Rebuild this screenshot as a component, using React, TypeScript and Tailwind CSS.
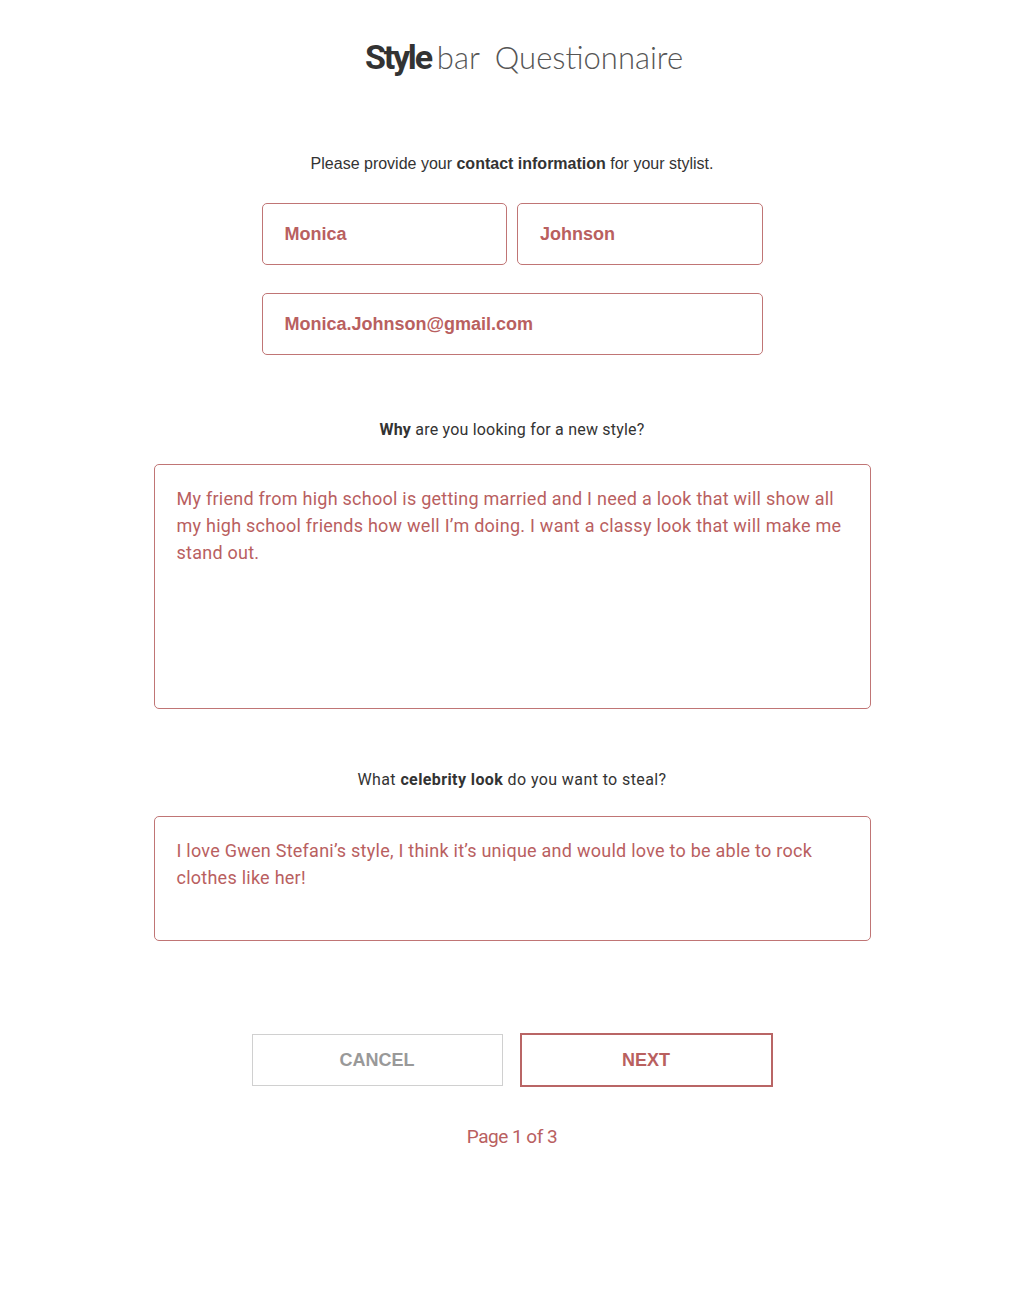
import React from 'react'

const red = 'text-[#b9605f]'

function Field({ value, className = '' }: { value: string; className?: string }) {
  return (
    <div
      className={`h-[62px] rounded-[5px] border border-[#c07575] flex items-center pl-[22px] text-[18px] font-semibold ${red} ${className}`}
    >
      {value}
    </div>
  )
}

export default function App() {
  return (
    <div className="min-h-[1306px] bg-white font-['Liberation_Sans',Arial,sans-serif] text-[#333]">
      <div className="flex flex-col items-center">
        <h1 className="mt-[35px] pl-[24px] flex items-baseline text-[31px] leading-[44px] text-[#333]">
          <span className="font-['Roboto',sans-serif] font-bold text-[34px] tracking-[-2.2px]">Style</span>
          <span className="ml-[6px] font-['Lato',sans-serif] font-light text-[#555]">bar</span>
          <span className="ml-[15px] font-['Lato',sans-serif] font-light text-[#555]">Questionnaire</span>
        </h1>

        <p className="mt-[74px] text-[16px] leading-[22px]">
          Please provide your <b>contact information</b> for your stylist.
        </p>

        <div className="mt-[28px] w-[501px] flex flex-col gap-[28px]">
          <div className="flex gap-[10px]">
            <Field value="Monica" className="flex-1" />
            <Field value="Johnson" className="flex-1" />
          </div>
          <Field value="Monica.Johnson@gmail.com" />
        </div>

        <p className="mt-[64px] text-[16px] leading-[22px] font-['Roboto',sans-serif] tracking-[0.2px]">
          <b>Why</b> are you looking for a new style?
        </p>

        <div
          className={`mt-[23px] w-[717px] h-[245px] rounded-[5px] border border-[#c07575] px-[22px] pt-[20px] text-[18px] leading-[27px] font-['Roboto',sans-serif] tracking-[0.25px] ${red}`}
        >
          My friend from high school is getting married and I need a look that will show all my high school friends how
          well I’m doing. I want a classy look that will make me stand out.
        </div>

        <p className="mt-[60px] text-[16px] leading-[22px] font-['Roboto',sans-serif] tracking-[0.4px]">
          What <b>celebrity look</b> do you want to steal?
        </p>

        <div
          className={`mt-[25px] w-[717px] h-[125px] rounded-[5px] border border-[#c07575] px-[22px] pt-[20px] text-[18px] leading-[27px] font-['Roboto',sans-serif] tracking-[0.25px] ${red}`}
        >
          I love Gwen Stefani’s style, I think it’s unique and would love to be able to rock clothes like her!
        </div>

        <div className="mt-[92px] flex items-center gap-[17px]">
          <button className="w-[251px] h-[52px] border border-[#d0d0d0] text-[18px] font-bold text-[#999]">
            CANCEL
          </button>
          <button className={`w-[253px] h-[54px] border-2 border-[#b96565] text-[18px] font-bold ${red}`}>NEXT</button>
        </div>

        <p className={`mt-[38px] text-[19px] leading-[24px] font-['Roboto',sans-serif] tracking-[-0.5px] ${red}`}>
          Page 1 of 3
        </p>
      </div>
    </div>
  )
}
